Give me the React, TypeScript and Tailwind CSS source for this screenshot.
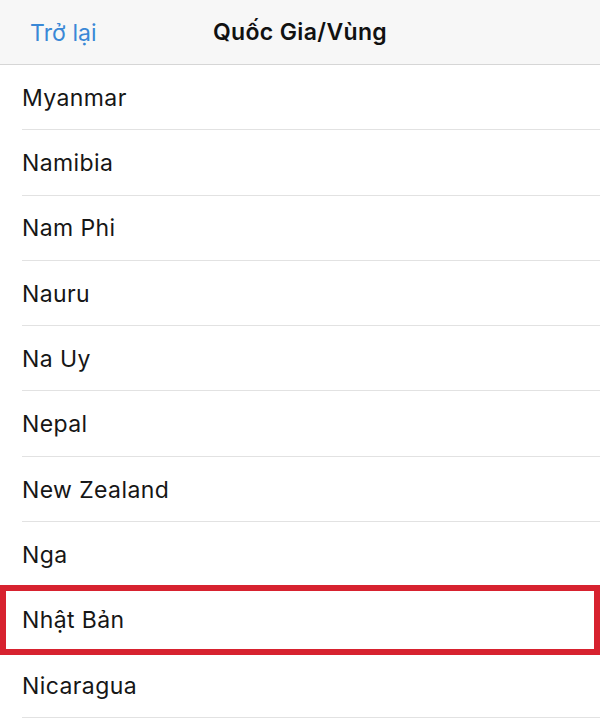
import React from "react";

const countries = [
  "Myanmar",
  "Namibia",
  "Nam Phi",
  "Nauru",
  "Na Uy",
  "Nepal",
  "New Zealand",
  "Nga",
  "Nhật Bản",
  "Nicaragua",
];

export default function App() {
  return (
    <div className="w-[600px] h-[719px] overflow-hidden bg-white" style={{ fontFamily: "Inter, 'Liberation Sans', sans-serif" }}>
      <div className="relative h-[65px] bg-[#f7f7f7] border-b border-[#d6d6d6] flex items-center justify-center">
        <span className="absolute left-[30px] top-[16px] text-[23px] text-[#3a88d6] tracking-[0.1px]">Trở lại</span>
        <span className="text-[23px] font-semibold text-[#111] tracking-[0.35px]">Quốc Gia/Vùng</span>
      </div>
      <div className="flex flex-col">
        {countries.map((c, i) => (
          <div key={c} className="relative h-[65.3px] pl-[22px] flex">
            <div className="flex-1 flex items-center border-b border-[#e2e2e2] text-[23px] text-[#161616] tracking-[0.4px] pt-[2px]">
              {c}
            </div>
            {i === 8 && (
              <div className="absolute left-0 right-0 top-[-2px] bottom-[-2px] border-[6px] border-[#d7222f]" />
            )}
          </div>
        ))}
      </div>
    </div>
  );
}
